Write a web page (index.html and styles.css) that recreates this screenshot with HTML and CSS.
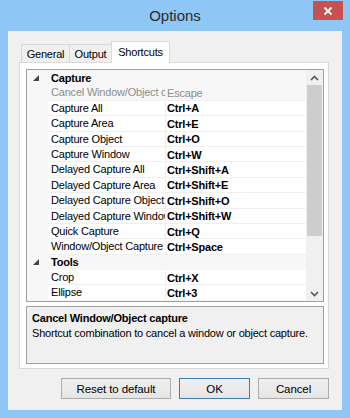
FILE: index.html
```html
<!DOCTYPE html>
<html lang="en">
<head>
  <meta charset="UTF-8">
  <title>Options</title>
  <link rel="stylesheet" href="styles.css">
</head>
<body>
  <div class="window">
    <div class="titlebar">
      <span class="title">Options</span>
      <div class="close">
        <svg width="10" height="10" viewBox="0 0 10 10"><path d="M1.5 1.5 L8.5 8.5 M8.5 1.5 L1.5 8.5" stroke="#fff" stroke-width="1.8"/></svg>
      </div>
    </div>
    <div class="client">
      <div class="tabs">
        <div class="tab general">General</div>
        <div class="tab output">Output</div>
        <div class="tab active">Shortcuts</div>
      </div>
      <div class="panel">
        <div class="grid">
          <div class="rows">
            <div class="row cat"><span class="gutter"><svg width="6" height="6" viewBox="0 0 6 6"><polygon points="6,0 6,6 0,6" fill="#444"/></svg></span><span class="catname">Capture</span></div>
            <div class="row off"><span class="gutter"></span><span class="name">Cancel Window/Object capture</span><span class="value">Escape</span></div>
            <div class="row"><span class="gutter"></span><span class="name">Capture All</span><span class="value">Ctrl+A</span></div>
            <div class="row"><span class="gutter"></span><span class="name">Capture Area</span><span class="value">Ctrl+E</span></div>
            <div class="row"><span class="gutter"></span><span class="name">Capture Object</span><span class="value">Ctrl+O</span></div>
            <div class="row"><span class="gutter"></span><span class="name">Capture Window</span><span class="value">Ctrl+W</span></div>
            <div class="row"><span class="gutter"></span><span class="name">Delayed Capture All</span><span class="value">Ctrl+Shift+A</span></div>
            <div class="row"><span class="gutter"></span><span class="name">Delayed Capture Area</span><span class="value">Ctrl+Shift+E</span></div>
            <div class="row"><span class="gutter"></span><span class="name">Delayed Capture Object</span><span class="value">Ctrl+Shift+O</span></div>
            <div class="row"><span class="gutter"></span><span class="name">Delayed Capture Window</span><span class="value">Ctrl+Shift+W</span></div>
            <div class="row"><span class="gutter"></span><span class="name">Quick Capture</span><span class="value">Ctrl+Q</span></div>
            <div class="row"><span class="gutter"></span><span class="name">Window/Object Capture</span><span class="value">Ctrl+Space</span></div>
            <div class="row cat"><span class="gutter"><svg width="6" height="6" viewBox="0 0 6 6"><polygon points="6,0 6,6 0,6" fill="#444"/></svg></span><span class="catname">Tools</span></div>
            <div class="row"><span class="gutter"></span><span class="name">Crop</span><span class="value">Ctrl+X</span></div>
            <div class="row"><span class="gutter"></span><span class="name">Ellipse</span><span class="value">Ctrl+3</span></div>
          </div>
          <div class="scrollbar">
            <div class="arrow"><svg width="9" height="6" viewBox="0 0 9 6"><path d="M1 5 L4.5 1.5 L8 5" stroke="#555" stroke-width="1.6" fill="none"/></svg></div>
            <div class="track"><div class="thumb"></div></div>
            <div class="arrow"><svg width="9" height="6" viewBox="0 0 9 6"><path d="M1 1 L4.5 4.5 L8 1" stroke="#555" stroke-width="1.6" fill="none"/></svg></div>
          </div>
        </div>
        <div class="desc">
          <div class="desc-title">Cancel Window/Object capture</div>
          <div>Shortcut combination to cancel a window or object capture.</div>
        </div>
      </div>
      <div class="buttons">
        <button class="btn wide">Reset to default</button>
        <button class="btn default">OK</button>
        <button class="btn">Cancel</button>
      </div>
    </div>
  </div>
</body>
</html>
```

FILE: styles.css
```css
body, html {
  margin: 0;
  height: 100%;
  font-family: 'Liberation Sans', Arial, sans-serif;
  font-size: 11px;
  letter-spacing: -0.2px;
  color: #000;
  background-color: #8ec6f6;
}
.window {
  width: 350px;
  height: 418px;
  display: flex;
  flex-direction: column;
}
.titlebar {
  height: 31px;
  display: flex;
  justify-content: center;
  align-items: center;
  position: relative;
}
.title {
  font-size: 15px;
  letter-spacing: 0;
  color: #2b2b2b;
  margin-top: -1px;
}
.close {
  position: absolute;
  right: 7px;
  top: 1px;
  width: 30px;
  height: 19px;
  background-color: #c75050;
  display: flex;
  justify-content: center;
  align-items: center;
}
.client {
  margin: 0 8px;
  height: 379px;
  background-color: #f0f0f0;
  padding: 10px 13px 0 11px;
  box-sizing: border-box;
}
.tabs {
  display: flex;
  align-items: flex-end;
  height: 21px;
  padding-left: 2px;
  position: relative;
  z-index: 1;
}
.tab {
  height: 18px;
  line-height: 18px;
  text-align: center;
  border: 1px solid #d9d9d9;
  border-bottom: none;
  background-color: #f0f0f0;
  box-sizing: border-box;
  margin-right: -1px;
}
.tab.general {
  width: 49px;
}
.tab.output {
  width: 43px;
}
.tab.active {
  width: 59px;
  height: 22px;
  line-height: 20px;
  background-color: #fff;
  margin-bottom: -1px;
}
.panel {
  height: 307px;
  border: 1px solid #d9d9d9;
  background-color: #fff;
  box-sizing: border-box;
  padding: 6px 4px 0 6px;
}
.grid {
  height: 233px;
  border: 1px solid #a0a0a0;
  box-sizing: border-box;
  display: flex;
}
.rows {
  flex: 1;
  overflow: hidden;
}
.row {
  height: 15.4px;
  display: flex;
  align-items: center;
  box-shadow: inset 0 -1px 0 #f0f0f0;
  white-space: nowrap;
}
.gutter {
  width: 21px;
  height: 100%;
  background-color: #f7f7f7;
  display: flex;
  align-items: center;
  justify-content: flex-end;
  padding-right: 9px;
  box-sizing: border-box;
  flex-shrink: 0;
}
.cat {
  background-color: #f7f7f7;
  box-shadow: none;
}
.catname {
  font-weight: bold;
  padding-left: 3px;
}
.name {
  width: 114px;
  padding-left: 3px;
  overflow: hidden;
  flex-shrink: 0;
  height: 100%;
  line-height: 15px;
  border-right: 1px solid #f0f0f0;
}
.value {
  padding-left: 1px;
  font-weight: bold;
}
.off {
  background-color: #f7f7f7;
  color: #8d8d8d;
}
.off .value {
  font-weight: normal;
}
.scrollbar {
  width: 17px;
  background-color: #f0f0f0;
  display: flex;
  flex-direction: column;
}
.arrow {
  height: 15px;
  display: flex;
  align-items: center;
  justify-content: center;
}
.track {
  flex: 1;
  padding: 0 1px;
}
.thumb {
  height: 151px;
  background-color: #cdcdcd;
}
.desc {
  margin-top: 4px;
  height: 58px;
  border: 1px solid #a0a0a0;
  background-color: #f0f0f0;
  box-sizing: border-box;
  padding: 4px 5px;
  line-height: 15px;
  white-space: nowrap;
}
.desc-title {
  font-weight: bold;
}
.buttons {
  display: flex;
  justify-content: flex-end;
  gap: 8px;
  margin-top: 9px;
}
.btn {
  width: 71px;
  height: 21px;
  font-family: 'Liberation Sans', Arial, sans-serif;
  font-size: 11.5px;
  letter-spacing: -0.1px;
  color: #000;
  border: 1px solid #acacac;
  background: linear-gradient(#f0f0f0, #e5e5e5);
  padding: 0;
}
.btn.wide {
  width: 110px;
}
.btn.default {
  border-color: #3c7fb1;
}
```
